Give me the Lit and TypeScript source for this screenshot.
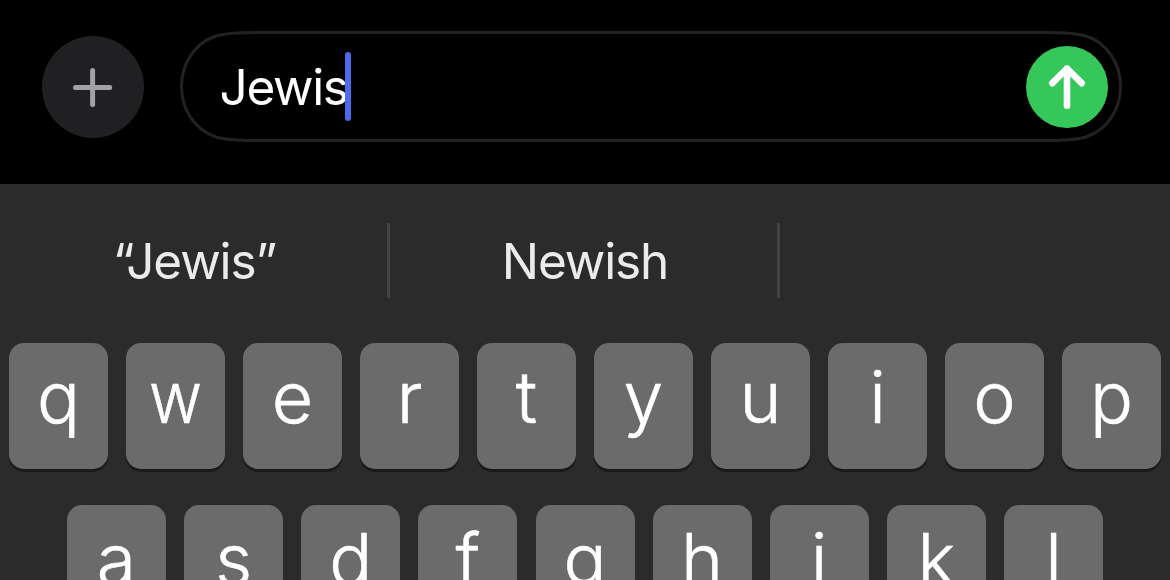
import { LitElement, html, css } from "lit";
import { customElement, property } from "lit/decorators.js";
import { classMap } from "lit/directives/class-map.js";

@customElement("key-row")
class KeyRow extends LitElement {
  @property() letters = "";

  static styles = css`
    :host {
      display: flex;
      justify-content: space-between;
      height: 126px;
    }
    .key {
      width: 99px;
      height: 126px;
      box-sizing: border-box;
      border-radius: 15px;
      background: #6b6b6b;
      box-shadow: 0 3px 0 #1a1a1a;
      color: #fff;
      font-size: 71.5px;
      font-weight: 300;
      -webkit-text-stroke: 0.6px #fff;
      line-height: 108px;
      text-align: center;
    }
    .glyph {
      display: block;
    }
    .narrow {
      transform: scaleX(0.91);
    }
  `;

  render() {
    return [...this.letters].map(
      (c) => html`<div class="key"><span class=${classMap({ glyph: true, narrow: c === "w" })}>${c}</span></div>`
    );
  }
}

@customElement("app-root")
class AppRoot extends LitElement {
  static styles = css`
    :host {
      display: flex;
      flex-direction: column;
      width: 1170px;
      height: 580px;
      overflow: hidden;
      background: #2b2b2b;
      font-family: Inter, "Liberation Sans", sans-serif;
    }
    .composer {
      display: flex;
      height: 184px;
      flex: none;
      box-sizing: border-box;
      padding: 31px 48px 0 42px;
      background: #000;
    }
    .plus {
      width: 102px;
      height: 102px;
      margin: 5px 36px 0 0;
      flex: none;
      border-radius: 50%;
      background: #202022;
    }
    .field {
      position: relative;
      display: flex;
      align-items: center;
      flex: 1;
      height: 111px;
      box-sizing: border-box;
      padding: 0 14px 0 39.5px;
    }
    .outline {
      position: absolute;
      inset: 0;
    }
    .draft {
      flex: 1;
      display: flex;
      align-items: center;
      color: #fff;
      font-size: 49.5px;
      letter-spacing: -1.35px;
      line-height: 60px;
    }
    .caret {
      width: 6px;
      height: 69px;
      margin-left: -3px;
      border-radius: 3px;
      background: #4a6cec;
      position: relative;
    }
    .send {
      width: 82px;
      height: 82px;
      border-radius: 50%;
      background: #35c759;
    }
    .icon {
      display: block;
    }
    .suggestions {
      display: grid;
      grid-template-columns: 390px 390px 390px;
      grid-template-rows: 75px;
      flex: none;
      height: 75px;
      margin-top: 39px;
    }
    .suggestion {
      box-sizing: border-box;
      height: 75px;
      padding-left: 3px;
      border-right: 3px solid #434343;
      color: #ebebeb;
      font-size: 49.5px;
      letter-spacing: -1.1px;
      line-height: 77px;
      text-align: center;
    }
    .suggestion:first-child {
      padding-left: 2px;
    }
    .suggestion:last-child {
      border: 0;
    }
    .first {
      flex: none;
      margin: 45px 9px 36px;
    }
    .second {
      flex: none;
      margin: 0 67px;
    }
  `;

  render() {
    return html`
      <div class="composer">
        <div class="plus">
          <svg class="icon" width="102" height="102" viewBox="0 0 102 102">
            <path d="M50.6 34.4V68.6M33.5 51.4H67.7" fill="none" stroke="#a2a2a5" stroke-width="5" stroke-linecap="round"/>
          </svg>
        </div>
        <div class="field">
          <svg class="outline" width="942" height="111" viewBox="0 0 942 111">
            <path
              d="M76 1.5H866C884 1.5 896 2 906 5C927 12 940.5 32 940.5 55.5S927 99 906 106C896 109 884 109.5 866 109.5H76C58 109.5 46 109 36 106C15 99 1.5 79 1.5 55.5S15 12 36 5C46 2 58 1.5 76 1.5Z"
              fill="none" stroke="#222223" stroke-width="3"/>
          </svg>
          <div class="draft"><span>Jewis</span><span class="caret"></span></div>
          <div class="send">
            <svg class="icon" width="82" height="82" viewBox="0 0 82 82">
              <path d="M41 59.8V22.5M26.3 37.2L41 22.5L55.7 37.2" fill="none" stroke="#fff" stroke-width="6.6" stroke-linecap="round" stroke-linejoin="round"/>
            </svg>
          </div>
        </div>
      </div>
      <div class="suggestions">
        <div class="suggestion">“Jewis”</div>
        <div class="suggestion">Newish</div>
        <div class="suggestion"></div>
      </div>
      <key-row class="first" letters="qwertyuiop"></key-row>
      <key-row class="second" letters="asdfghjkl"></key-row>
    `;
  }
}
